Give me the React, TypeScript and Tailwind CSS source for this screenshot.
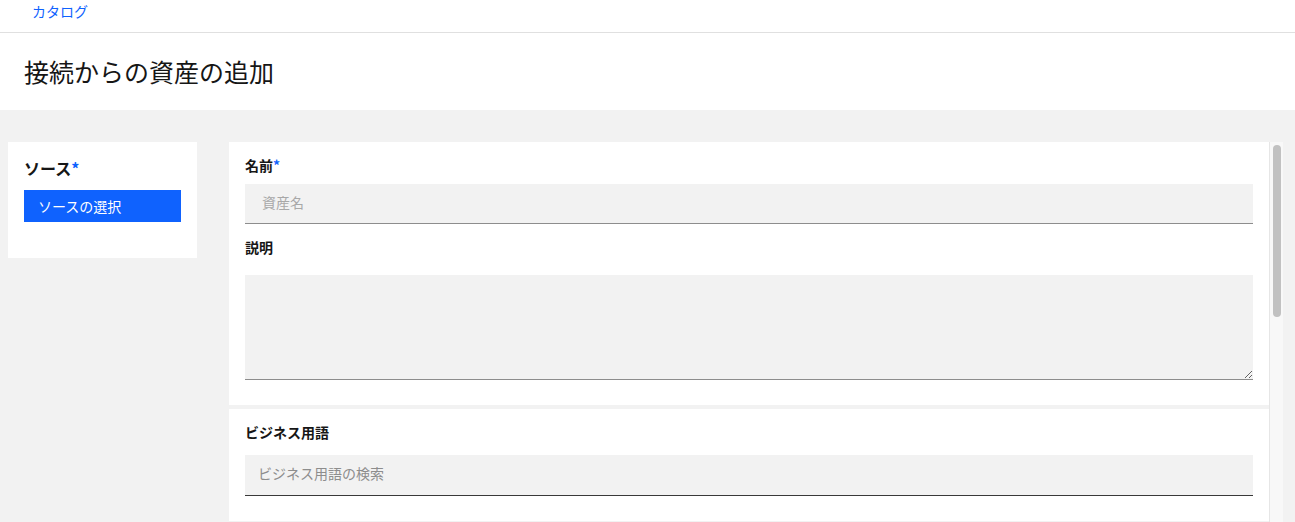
import React from "react";

function FieldLabel({ children, required }: { children: React.ReactNode; required?: boolean }) {
  return (
    <p className="text-[14px] font-bold leading-[18px] text-[#161616]">
      {children}
      {required && <span className="text-[#0f62fe]">*</span>}
    </p>
  );
}

function App() {
  return (
    <div className="h-screen flex flex-col overflow-hidden bg-white font-['Noto_Sans_CJK_JP',sans-serif] text-[#161616]">
      {/* breadcrumb */}
      <nav className="h-[33px] shrink-0 border-b border-[#e0e0e0] pl-8 flex items-center">
        <a href="#" className="text-[14px] leading-[18px] text-[#0f62fe] -mt-[10px]">
          カタログ
        </a>
      </nav>

      {/* page header */}
      <header className="h-[77px] shrink-0 px-6 flex items-center">
        <h1 className="text-[25px] leading-[32px] font-normal text-[#161616] -mt-[1px]">接続からの資産の追加</h1>
      </header>

      <main className="flex-1 min-h-0 bg-[#f2f2f2] pt-8 pl-2 pr-3 flex gap-8">
        {/* source */}
        <aside className="w-[189px] h-[116px] shrink-0 bg-white px-4 pt-[15px]">
          <p className="text-[16px] font-bold leading-[22px]">
            ソース<span className="text-[#0f62fe]">*</span>
          </p>
          <button
            type="button"
            className="mt-[11px] w-[157px] h-8 bg-[#0f62fe] text-white text-[14px] leading-[18px] text-left pl-[14px]"
          >
            ソースの選択
          </button>
        </aside>

        {/* form */}
        <div className="flex-1 min-w-0 flex">
          <div className="w-[1040px] shrink-0 flex flex-col gap-1 overflow-hidden">
            <section className="bg-white px-4 pt-[14px] pb-[25px] shrink-0">
              <FieldLabel required>名前</FieldLabel>
              <input
                placeholder="資産名"
                className="mt-[10px] w-full h-10 bg-[#f2f2f2] border-b border-[#8d8d8d] pl-[17px] pb-1 text-[14px] outline-none placeholder:text-[#a8a8a8]"
              />
              <div className="mt-[14px]">
                <FieldLabel>説明</FieldLabel>
              </div>
              <textarea className="mt-[19px] block w-full h-[105px] bg-[#f2f2f2] border-b border-[#8d8d8d] outline-none" />
            </section>

            <section className="bg-white px-4 pt-[14px] pb-[25px] shrink-0">
              <FieldLabel>ビジネス用語</FieldLabel>
              <input
                placeholder="ビジネス用語の検索"
                className="mt-[14px] w-full h-[41px] bg-[#f2f2f2] border-b border-[#393939] pl-[13px] pb-1 text-[14px] outline-none placeholder:text-[#8d8d8d]"
              />
            </section>

            <section className="bg-white h-[120px] shrink-0" />
          </div>

          {/* scrollbar */}
          <div className="w-[14px] shrink-0 bg-[#f8f8f8] border-l border-[#e6e6e6] pt-[3px] pl-[3px]">
            <div className="w-2 h-[172px] rounded-full bg-[#c1c1c1]" />
          </div>
        </div>
      </main>
    </div>
  );
}

export default App;
